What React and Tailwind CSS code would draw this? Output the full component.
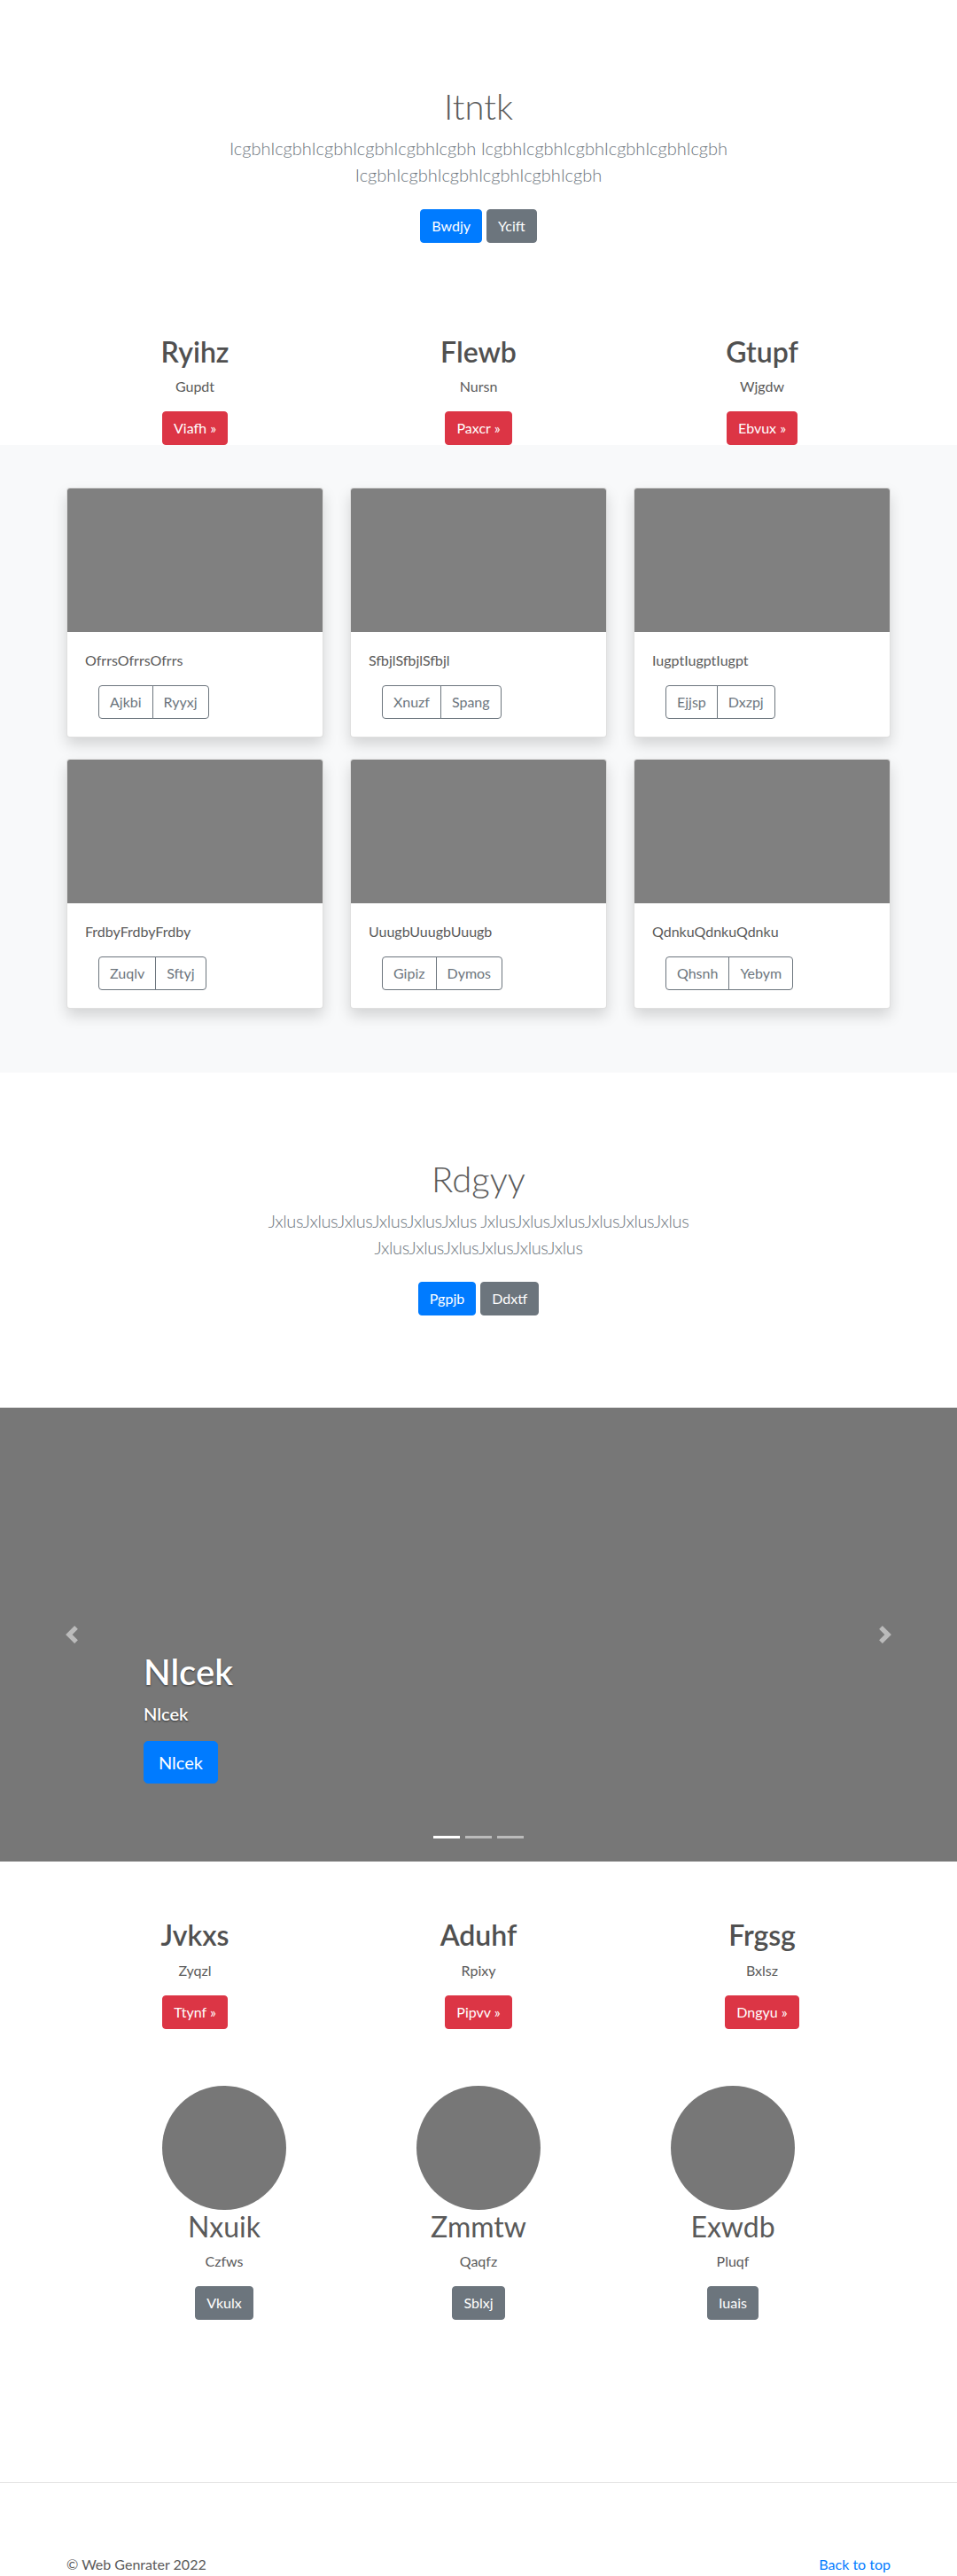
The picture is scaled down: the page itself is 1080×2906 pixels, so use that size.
import React from "react";

const btn =
  "inline-block rounded-[4px] border px-3 py-[6px] text-[16px] leading-6 text-white";

function Jumbo({ title, lead, b1, b2 }) {
  return (
    <section className="pt-24 pb-24 text-center">
      <div className="mx-auto max-w-[640px] px-[15px]">
        <h1 className="mb-2 text-[40px] leading-[48px] font-light">{title}</h1>
        <p className="mb-4 text-[20px] leading-[30px] font-light text-[#6c757d]">{lead}</p>
        <div className="flex justify-center gap-[5px] py-2">
          <a className={btn + " border-[#007bff] bg-[#007bff]"}>{b1}</a>
          <a className={btn + " border-[#6c757d] bg-[#6c757d]"}>{b2}</a>
        </div>
      </div>
    </section>
  );
}

function Marketing({ items }) {
  return (
    <div className="mx-auto grid w-[960px] grid-cols-3">
      {items.map(([h, p, b]) => (
        <div key={h} className="px-[15px] text-center">
          <h2 className="mb-2 text-[32px] leading-[1.2] font-semibold text-[#505050]">{h}</h2>
          <p className="mb-4 text-[16px] leading-6">{p}</p>
          <a className={btn + " border-[#dc3545] bg-[#dc3545]"}>{b} &raquo;</a>
        </div>
      ))}
    </div>
  );
}

const cards = [
  ["OfrrsOfrrsOfrrs", "Ajkbi", "Ryyxj"],
  ["SfbjlSfbjlSfbjl", "Xnuzf", "Spang"],
  ["IugptIugptIugpt", "Ejjsp", "Dxzpj"],
  ["FrdbyFrdbyFrdby", "Zuqlv", "Sftyj"],
  ["UuugbUuugbUuugb", "Gipiz", "Dymos"],
  ["QdnkuQdnkuQdnku", "Qhsnh", "Yebym"],
];

const obtn =
  "inline-block border border-[#6c757d] px-3 py-[6px] text-[16px] leading-6 text-[#6c757d]";

function Card({ text, a, b }) {
  return (
    <div className="rounded-[4px] border border-[rgba(0,0,0,0.125)] bg-white shadow-[0_8px_16px_rgba(0,0,0,0.15)]">
      <div className="h-[162px] rounded-t-[3px] bg-[#808080]" />
      <div className="p-5">
        <p className="mb-4 text-[16px] leading-6">{text}</p>
        <div className="ml-[15px] inline-flex">
          <a className={obtn + " rounded-l-[4px]"}>{a}</a>
          <a className={obtn + " -ml-px rounded-r-[4px]"}>{b}</a>
        </div>
      </div>
    </div>
  );
}

const people = [
  ["Nxuik", "Czfws", "Vkulx"],
  ["Zmmtw", "Qaqfz", "Sblxj"],
  ["Exwdb", "Pluqf", "Iuais"],
];

export default function App() {
  return (
    <div className="min-h-[2906px] bg-white font-['Lato','Open_Sans',sans-serif] text-[16px] leading-6 text-[#5a5a5a]">
      <Jumbo
        title="Itntk"
        lead="IcgbhIcgbhIcgbhIcgbhIcgbhIcgbh IcgbhIcgbhIcgbhIcgbhIcgbhIcgbh IcgbhIcgbhIcgbhIcgbhIcgbhIcgbh"
        b1="Bwdjy"
        b2="Ycift"
      />
      <Marketing
        items={[
          ["Ryihz", "Gupdt", "Viafh"],
          ["Flewb", "Nursn", "Paxcr"],
          ["Gtupf", "Wjgdw", "Ebvux"],
        ]}
      />
      <section className="bg-[#f8f9fa] py-12">
        <div className="mx-auto grid w-[960px] grid-cols-3 gap-x-[30px] gap-y-6 px-[15px]">
          {cards.map(([t, a, b]) => (
            <Card key={t} text={t} a={a} b={b} />
          ))}
        </div>
        <div className="h-6" />
      </section>
      <Jumbo
        title="Rdgyy"
        lead={
          <span className="tracking-[-0.4px]">
            JxlusJxlusJxlusJxlusJxlusJxlus JxlusJxlusJxlusJxlusJxlusJxlus JxlusJxlusJxlusJxlusJxlusJxlus
          </span>
        }
        b1="Pgpjb"
        b2="Ddxtf"
      />
      <section className="relative h-[512px] overflow-hidden bg-[#777777]">
        <div className="absolute inset-y-0 left-0 flex w-[15%] items-center justify-center opacity-50">
          <svg width="20" height="20" viewBox="0 0 8 8" fill="#fff">
            <path d="M5.25 0l-4 4 4 4 1.5-1.5-2.5-2.5 2.5-2.5-1.5-1.5z" />
          </svg>
        </div>
        <div className="absolute inset-y-0 right-0 flex w-[15%] items-center justify-center opacity-50">
          <svg width="20" height="20" viewBox="0 0 8 8" fill="#fff">
            <path d="M2.75 0l-1.5 1.5 2.5 2.5-2.5 2.5 1.5 1.5 4-4-4-4z" />
          </svg>
        </div>
        <div className="absolute bottom-[52px] left-[15%] right-[15%] py-5 text-left text-white [text-shadow:0_1px_2px_rgba(0,0,0,0.6)]">
          <h1 className="mb-2 text-[40px] leading-[48px] font-semibold">Nlcek</h1>
          <p className="mb-4 text-[20px] leading-[30px] font-semibold">Nlcek</p>
          <p className="mb-4">
            <a className="inline-block rounded-[5px] border border-[#007bff] bg-[#007bff] px-4 py-2 text-[20px] leading-[30px] text-white [text-shadow:none]">
              Nlcek
            </a>
          </p>
        </div>
        <div className="absolute bottom-[26px] left-0 right-0 flex justify-center gap-[6px]">
          <span className="h-[3px] w-[30px] bg-white" />
          <span className="h-[3px] w-[30px] bg-[rgba(255,255,255,0.5)]" />
          <span className="h-[3px] w-[30px] bg-[rgba(255,255,255,0.5)]" />
        </div>
      </section>
      <div className="mt-16">
        <Marketing
          items={[
            ["Jvkxs", "Zyqzl", "Ttynf"],
            ["Aduhf", "Rpixy", "Pipvv"],
            ["Frgsg", "Bxlsz", "Dngyu"],
          ]}
        />
      </div>
      <div className="mx-auto mt-16 grid w-[861px] grid-cols-3">
        {people.map(([n, s, b]) => (
          <div key={n} className="flex flex-col items-center text-center">
            <div className="h-[140px] w-[140px] rounded-full bg-[#777777]" />
            <h2 className="mb-2 text-[32px] leading-[1.2] font-normal">{n}</h2>
            <p className="mb-4">{s}</p>
            <a className={btn + " border-[#6c757d] bg-[#6c757d]"}>{b}</a>
          </div>
        ))}
      </div>
      <hr className="mt-[183px] border-0 border-t border-[rgba(0,0,0,0.1)]" />
      <footer className="mx-auto mt-20 flex w-[960px] justify-between px-[15px] pb-12">
        <p>&copy; Web Genrater 2022</p>
        <a className="text-[#007bff]">Back to top</a>
      </footer>
    </div>
  );
}
